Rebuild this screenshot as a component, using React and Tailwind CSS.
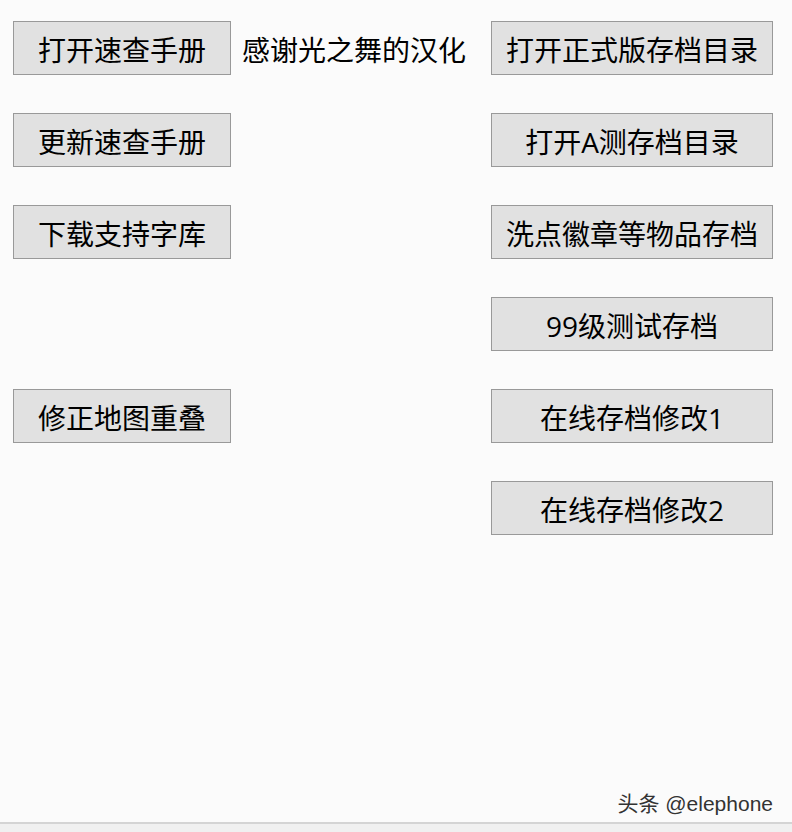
import React from "react";

const font = { fontFamily: '"Open Sans", "Noto Sans CJK SC", sans-serif' };

function Btn({ children }) {
  return (
    <div className="h-[54px] flex items-center justify-center bg-[#e1e1e1] border border-[#999999] text-black text-[28px] leading-none pt-[3px]">
      {children}
    </div>
  );
}

export default function App() {
  const left = ["打开速查手册", "更新速查手册", "下载支持字库", null, "修正地图重叠"];
  const right = [
    "打开正式版存档目录",
    "打开A测存档目录",
    "洗点徽章等物品存档",
    "99级测试存档",
    "在线存档修改1",
    "在线存档修改2",
  ];
  return (
    <div className="w-[792px] h-[832px] bg-[#fbfbfb] flex flex-col" style={font}>
      <div className="relative flex-1 pt-[21px] pl-[13px]">
        <div className="grid grid-cols-[218px_260px_282px] grid-rows-[repeat(6,54px)] gap-y-[38px]">
          {right.map((r, i) => (
            <React.Fragment key={i}>
              {left[i] ? <Btn>{left[i]}</Btn> : <div />}
              {i === 0 ? (
                <div className="flex items-center pl-[11px] pt-[3px] text-[28px] leading-none text-black">
                  感谢光之舞的汉化
                </div>
              ) : (
                <div />
              )}
              <Btn>{r}</Btn>
            </React.Fragment>
          ))}
        </div>
        <div
          className="absolute right-[19px] bottom-[3px] text-[21px] text-[#333333]"
          style={{ fontFamily: '"Liberation Sans", "Noto Sans CJK SC", sans-serif' }}
        >
          头条 @elephone
        </div>
      </div>
      <div className="h-[10px] border-t-2 border-[#d4d4d4] bg-[#f0f0f0]" />
    </div>
  );
}
